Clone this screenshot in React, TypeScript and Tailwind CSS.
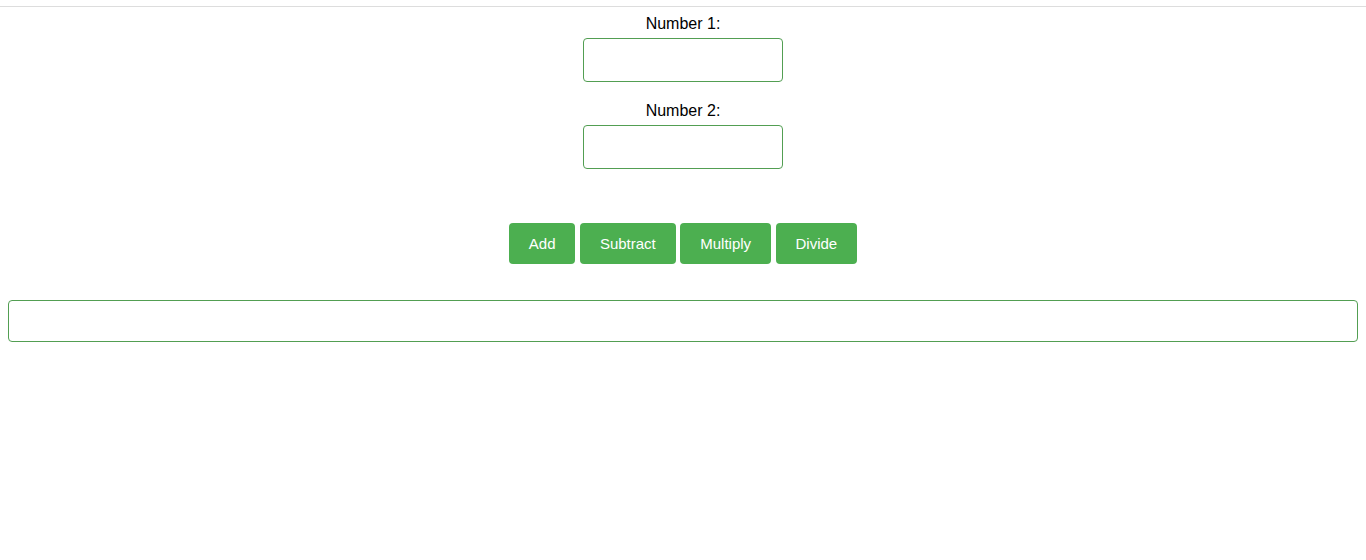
export default function App() {
  const ops = ['Add', 'Subtract', 'Multiply', 'Divide'];

  return (
    <div className="min-h-[560px] bg-white font-['Liberation_Sans',Arial,sans-serif] text-black">
      <div className="h-[6px]" />
      <div className="h-px bg-[#dddddd]" />
      <div className="flex flex-col items-center pt-[8px]">
        <label className="text-[16px] leading-[18px]">Number 1:</label>
        <input className="mt-[5px] h-[44px] w-[200px] rounded-[4px] border border-[#529e52] outline-none" />
        <label className="mt-[20px] text-[16px] leading-[18px]">Number 2:</label>
        <input className="mt-[5px] h-[44px] w-[200px] rounded-[4px] border border-[#529e52] outline-none" />
      </div>

      <div className="mt-[54px] flex justify-center gap-[4.45px]">
        {ops.map(op => (
          <button
            key={op}
            type="button"
            className="h-[41px] rounded-[4px] bg-[#4caf50] px-[20px] pt-[2px] text-[15px] text-white"
          >
            {op}
          </button>
        ))}
      </div>

      <div className="mx-[8px] mt-[36px] h-[42px] rounded-[4px] border border-[#529e52]" />
    </div>
  );
}
